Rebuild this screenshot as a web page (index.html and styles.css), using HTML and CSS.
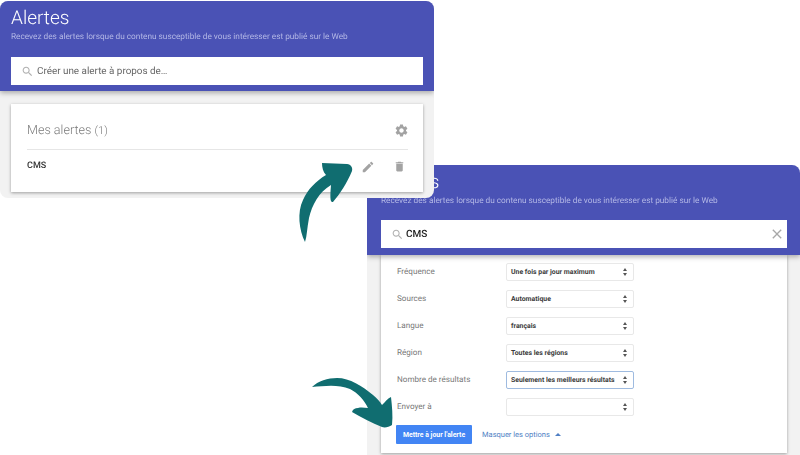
FILE: index.html
```html
<!DOCTYPE html>
<html lang="fr">
<head>
    <meta charset="UTF-8">
    <meta name="viewport" content="width=device-width, initial-scale=1.0">
    <title>Alertes</title>
    <link rel="stylesheet" href="styles.css">
</head>
<body>
    <!-- Fenêtre du bas : modification de l'alerte -->
    <section class="window window-edit">
        <header class="window-header">
            <h1>Alertes</h1>
            <p>Recevez des alertes lorsque du contenu susceptible de vous intéresser est publié sur le Web</p>
            <div class="search-box">
                <svg class="search-icon" viewBox="0 0 24 24"><path d="M15.5 14h-.79l-.28-.27C15.41 12.59 16 11.11 16 9.5 16 5.91 13.09 3 9.5 3S3 5.91 3 9.5 5.91 16 9.5 16c1.61 0 3.09-.59 4.23-1.57l.27.28v.79l5 4.99L20.49 19l-4.99-5zm-6 0C7.01 14 5 11.99 5 9.5S7.01 5 9.5 5 14 7.01 14 9.5 11.99 14 9.5 14z"/></svg>
                <span class="search-value">CMS</span>
                <svg class="close-icon" viewBox="0 0 24 24"><path d="M19 6.41L17.59 5 12 10.59 6.41 5 5 6.41 10.59 12 5 17.59 6.41 19 12 13.41 17.59 19 19 17.59 13.41 12 19 6.41z"/></svg>
            </div>
        </header>
        <div class="options-card">
            <div class="option-row">
                <span class="option-label">Fréquence</span>
                <div class="select-box"><span>Une fois par jour maximum</span><i class="select-arrows"></i></div>
            </div>
            <div class="option-row">
                <span class="option-label">Sources</span>
                <div class="select-box"><span>Automatique</span><i class="select-arrows"></i></div>
            </div>
            <div class="option-row">
                <span class="option-label">Langue</span>
                <div class="select-box"><span>français</span><i class="select-arrows"></i></div>
            </div>
            <div class="option-row">
                <span class="option-label">Région</span>
                <div class="select-box"><span>Toutes les régions</span><i class="select-arrows"></i></div>
            </div>
            <div class="option-row">
                <span class="option-label">Nombre de résultats</span>
                <div class="select-box select-focus"><span>Seulement les meilleurs résultats</span><i class="select-arrows"></i></div>
            </div>
            <div class="option-row">
                <span class="option-label">Envoyer à</span>
                <div class="select-box"><span></span><i class="select-arrows"></i></div>
            </div>
            <div class="option-actions">
                <button type="button" class="btn">Mettre à jour l'alerte</button>
                <a href="#" class="options-link">Masquer les options</a>
                <i class="link-caret"></i>
            </div>
        </div>
    </section>

    <!-- Fenêtre du haut : liste des alertes -->
    <section class="window window-list">
        <header class="window-header">
            <h1>Alertes</h1>
            <p>Recevez des alertes lorsque du contenu susceptible de vous intéresser est publié sur le Web</p>
            <div class="search-box">
                <svg class="search-icon" viewBox="0 0 24 24"><path d="M15.5 14h-.79l-.28-.27C15.41 12.59 16 11.11 16 9.5 16 5.91 13.09 3 9.5 3S3 5.91 3 9.5 5.91 16 9.5 16c1.61 0 3.09-.59 4.23-1.57l.27.28v.79l5 4.99L20.49 19l-4.99-5zm-6 0C7.01 14 5 11.99 5 9.5S7.01 5 9.5 5 14 7.01 14 9.5 11.99 14 9.5 14z"/></svg>
                <span class="search-placeholder">Créer une alerte à propos de…</span>
            </div>
        </header>
        <div class="alerts-card">
            <div class="alerts-title">
                <h2>Mes alertes <small>(1)</small></h2>
                <svg class="icon icon-gear" viewBox="0 0 24 24"><path d="M19.14 12.94c.04-.3.06-.61.06-.94 0-.32-.02-.64-.07-.94l2.03-1.58c.18-.14.23-.41.12-.61l-1.92-3.32c-.12-.22-.37-.29-.59-.22l-2.39.96c-.5-.38-1.03-.7-1.62-.94l-.36-2.54c-.04-.24-.24-.41-.48-.41h-3.84c-.24 0-.43.17-.47.41l-.36 2.54c-.59.24-1.13.57-1.62.94l-2.39-.96c-.22-.08-.47 0-.59.22L2.74 8.87c-.12.21-.08.47.12.61l2.03 1.58c-.05.3-.09.63-.09.94s.02.64.07.94l-2.03 1.58c-.18.14-.23.41-.12.61l1.92 3.32c.12.22.37.29.59.22l2.39-.96c.5.38 1.03.7 1.62.94l.36 2.54c.05.24.24.41.48.41h3.84c.24 0 .44-.17.47-.41l.36-2.54c.59-.24 1.13-.56 1.62-.94l2.39.96c.22.08.47 0 .59-.22l1.92-3.32c.12-.22.07-.47-.12-.61l-2.01-1.58zM12 15.6c-1.98 0-3.6-1.62-3.6-3.6s1.62-3.6 3.6-3.6 3.6 1.62 3.6 3.6-1.62 3.6-3.6 3.6z"/></svg>
            </div>
            <div class="alert-row">
                <span class="alert-name">CMS</span>
                <svg class="icon icon-pencil" viewBox="0 0 24 24"><path d="M3 17.25V21h3.75L17.81 9.94l-3.75-3.75L3 17.25zM20.71 7.04c.39-.39.39-1.02 0-1.41l-2.34-2.34c-.39-.39-1.02-.39-1.41 0l-1.83 1.83 3.75 3.75 1.83-1.83z"/></svg>
                <svg class="icon icon-trash" viewBox="0 0 24 24"><path d="M6 19c0 1.1.9 2 2 2h8c1.1 0 2-.9 2-2V7H6v12zM19 4h-3.5l-1-1h-5l-1 1H5v2h14V4z"/></svg>
            </div>
        </div>
    </section>

    <!-- Flèches par-dessus les deux fenêtres -->
    <svg class="arrows" viewBox="0 0 800 455">
        <path d="M305 242C299 230 297 212 303 200C308 189 316 181 326 175C323 172 322 167 322 163L347 164C351 164 353 168 352 171C347 183 340 194 333 202C330 203 330 197 331 185C319 192 312 205 309 218C307 228 307 236 305 242Z"/>
        <path d="M312 387C318 381 328 378 337 378C350 378 362 386 373 395C377 398 380 402 382 405C385 402 388 398 391 397C392 406 393 416 392 425C389 427 385 428 382 427C372 423 361 417 352 412C353 409 355 408 358 408C362 407 365 408 368 408C364 400 358 393 350 389C338 384 324 386 312 387Z"/>
    </svg>
</body>
</html>
```

FILE: styles.css
```css
* {
    box-sizing: border-box;
}

body {
    margin: 0;
    width: 800px;
    height: 455px;
    overflow: hidden;
    position: relative;
    background-color: #ffffff;
    font-family: Roboto, 'Liberation Sans', sans-serif;
    text-rendering: geometricPrecision;
}

h1, h2, p {
    margin: 0;
}

.window {
    position: absolute;
    background-color: #f2f2f2;
    border-radius: 8px;
    overflow: hidden;
    filter: blur(0.3px);
}

.window-list {
    left: 0;
    top: 1px;
    width: 434px;
    height: 197px;
}

.window-edit {
    left: 367px;
    top: 165px;
    width: 433px;
    height: 290px;
    border-radius: 8px 8px 0 0;
}

.window-header {
    position: relative;
    z-index: 1;
    height: 90px;
    padding: 5px 11px 0;
    background-color: #4a52b5;
    box-shadow: 0 2px 5px rgba(0, 0, 0, 0.3);
}

.window-edit .window-header {
    padding: 5px 13px 0 14px;
}

.window-edit .search-box {
    margin-top: 13px;
}

.window-header h1 {
    color: #ffffff;
    font-size: 19px;
    font-weight: 300;
    line-height: 24px;
}

.window-header p {
    color: #b4b8e6;
    font-size: 8.25px;
    line-height: 12px;
    margin-top: 1px;
}

.search-box {
    display: flex;
    align-items: center;
    height: 28px;
    margin-top: 14px;
    padding: 0 10px;
    background-color: #ffffff;
}

.search-icon {
    width: 13px;
    height: 13px;
    fill: #b0b0b0;
    margin-right: 3px;
}

.search-placeholder {
    color: #666666;
    font-size: 9.9px;
}

.search-value {
    flex: 1;
    margin-left: -1px;
    color: #222222;
    font-size: 10px;
    font-weight: 500;
}

.close-icon {
    width: 16px;
    height: 16px;
    fill: #a8a8a8;
    margin-right: -8px;
}

.alerts-card {
    margin: 13px 11px 0;
    height: 88px;
    padding: 0 15px 0 16px;
    background-color: #ffffff;
    box-shadow: 0 1px 3px rgba(0, 0, 0, 0.35);
}

.alerts-title {
    display: flex;
    align-items: center;
    justify-content: space-between;
    height: 46px;
    padding-top: 7px;
    border-bottom: 1px solid #e6e6e6;
}

.alerts-title h2 {
    color: #7a7a7a;
    font-size: 12.6px;
    font-weight: 300;
}

.alerts-title small {
    font-size: 11px;
}

.alert-row {
    display: flex;
    align-items: center;
    height: 31px;
}

.alert-name {
    flex: 1;
    color: #333333;
    font-size: 9px;
    font-weight: 500;
}

.icon {
    fill: #a3a3a3;
}

.icon-gear {
    width: 15px;
    height: 15px;
    margin-right: -1px;
}

.icon-pencil {
    width: 14px;
    height: 14px;
    margin: 2px 18px 0 0;
}

.icon-trash {
    width: 13px;
    height: 13px;
    margin: 2px 2px 0 0;
}

.options-card {
    height: 198px;
    margin: 0 13px 0 14px;
    padding: 8px 0 0 16px;
    background-color: #ffffff;
    box-shadow: 0 1px 3px rgba(0, 0, 0, 0.35);
}

.option-row {
    display: flex;
    align-items: center;
    height: 18px;
    margin-bottom: 9px;
}

.option-label {
    width: 109px;
    margin-top: -2px;
    color: #777777;
    font-size: 8.1px;
}

.select-box {
    display: flex;
    align-items: center;
    justify-content: space-between;
    width: 128px;
    height: 18px;
    padding: 0 5px 0 4px;
    border: 1px solid #e8e8e8;
    border-radius: 2px;
    color: #3c3c3c;
    font-size: 6.9px;
    font-weight: 700;
    white-space: nowrap;
}

.select-focus {
    border-color: #9fbbe0;
}

.select-arrows {
    position: relative;
    width: 5px;
    height: 8px;
}

.select-arrows::before,
.select-arrows::after {
    content: "";
    position: absolute;
    left: 0;
    border-left: 2.5px solid transparent;
    border-right: 2.5px solid transparent;
}

.select-arrows::before {
    top: 0;
    border-bottom: 3px solid #555555;
}

.select-arrows::after {
    bottom: 0;
    border-top: 3px solid #555555;
}

.option-actions {
    display: flex;
    align-items: center;
    margin-left: -1px;
}

.btn {
    width: 76px;
    height: 19px;
    padding: 0;
    border: none;
    border-radius: 1px;
    background-color: #4285f4;
    color: #ffffff;
    font-family: inherit;
    font-size: 6.9px;
    font-weight: 700;
}

.options-link {
    margin-left: 10px;
    color: #4f7fc4;
    font-size: 7.5px;
    text-decoration: none;
}

.link-caret {
    margin-left: 5px;
    border-left: 3px solid transparent;
    border-right: 3px solid transparent;
    border-bottom: 3px solid #4f7fc4;
}

.arrows {
    position: absolute;
    left: 0;
    top: 0;
    width: 800px;
    height: 455px;
    fill: #106d70;
}
```
